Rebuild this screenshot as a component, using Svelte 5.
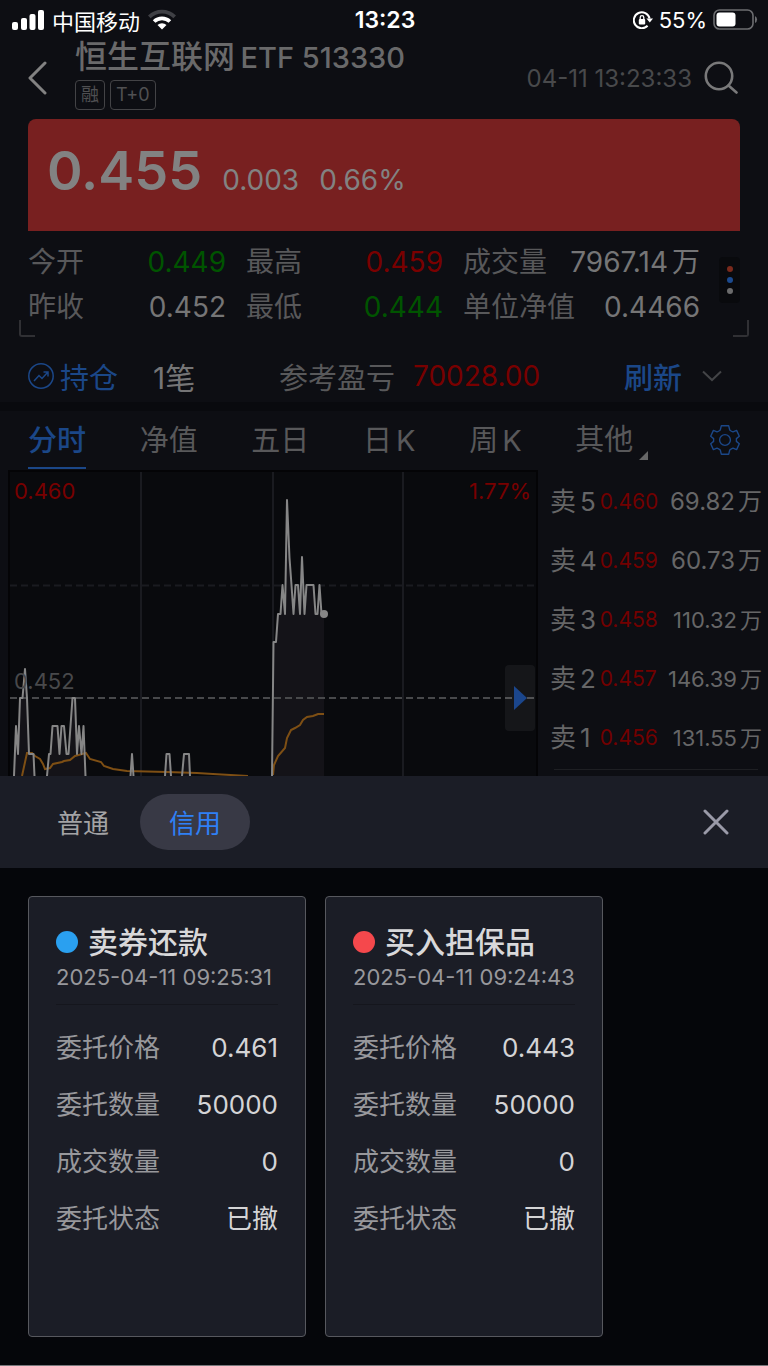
<script>
  let period = "分时";
  let account = "信用";

  const periods = [
    { name: "分时" },
    { name: "净值" },
    { name: "五日" },
    { name: "日", suffix: "K" },
    { name: "周", suffix: "K" },
  ];

  const quotes = [
    { label: "今开", value: "0.449", tone: "down" },
    { label: "最高", value: "0.459", tone: "up" },
    { label: "成交量", value: "7967.14", unit: "万", tone: "" },
    { label: "昨收", value: "0.452", tone: "" },
    { label: "最低", value: "0.444", tone: "down" },
    { label: "单位净值", value: "0.4466", tone: "" },
  ];

  const asks = [
    { level: 5, price: "0.460", volume: "69.82" },
    { level: 4, price: "0.459", volume: "60.73" },
    { level: 3, price: "0.458", volume: "110.32" },
    { level: 2, price: "0.457", volume: "146.39" },
    { level: 1, price: "0.456", volume: "131.55" },
  ];

  const orders = [
    {
      name: "卖券还款",
      side: "sell",
      time: "2025-04-11 09:25:31",
      rows: [
        ["委托价格", "0.461"],
        ["委托数量", "50000"],
        ["成交数量", "0"],
        ["委托状态", "已撤"],
      ],
    },
    {
      name: "买入担保品",
      side: "buy",
      time: "2025-04-11 09:24:43",
      rows: [
        ["委托价格", "0.443"],
        ["委托数量", "50000"],
        ["成交数量", "0"],
        ["委托状态", "已撤"],
      ],
    },
  ];

  // Price line, split where it drops below the visible part of the chart
  const priceLines = [
    "6,306 8,256 10,284 12,228 14.5,228 17,199 19,228 21,284 25.5,284 26.5,306",
    "39,306 41,284 42.5,284 44.5,256 49.5,256 51.5,284 53.5,256 56,256 58.5,284 60.5,284 64.5,228 67,228 69,284 71,256 73.5,284 75.5,256 77.5,306",
    "122.5,306 124,284 125.5,306",
    "157,306 158.5,284 161.5,284 163,306",
    "174,306 176,284 181,284 182,306",
    "264,306 265.5,172 268,172 270,144 272.5,144 274.5,115 277,144 279,30 281.5,88 283.5,115 285.5,144 287.5,115 290,115 292,144 294,87 296.5,144 298.5,115 305.5,115 307.5,144 309.5,144 311.5,115 313.5,144 316,144",
  ];

  const averageLines = [
    "14,306 19,283 24,283 27,286 32,289 35,294 37,299 42,298 45,294 54,292 56,291 62,290 67,286 78,283 82,289 93,292 96,296 105,299 119,301 159,302 189,303 205,304 240,306",
    "265,305 266,295 270,286 277,278 279,268 283,260 287,258 292,255 295,250 299,247 305,246 310,244 316,244",
  ];
</script>

<div class="app">
  <div class="status">
    <div class="carrier">
      <svg width="32" height="20" viewBox="0 0 32 20" fill="#fff">
        <rect x="0" y="12" width="6" height="8" rx="2" />
        <rect x="9" y="8" width="6" height="12" rx="2" />
        <rect x="17.5" y="4" width="6" height="16" rx="2" />
        <rect x="26" y="0" width="6" height="20" rx="2" />
      </svg>
      <span>中国移动</span>
      <svg width="28" height="21" viewBox="0 0 28 21">
        <path d="M0 6.5 A20 20 0 0 1 28 6.5 L25.4 9.2 A16.2 16.2 0 0 0 2.6 9.2 Z" fill="#3f4045" />
        <path d="M4.8 11.2 A13.2 13.2 0 0 1 23.2 11.2 L20.6 13.8 A9.5 9.5 0 0 0 7.4 13.8 Z" fill="#fff" />
        <path d="M9.5 16 A6.5 6.5 0 0 1 18.5 16 L14 20.5 Z" fill="#fff" />
      </svg>
    </div>
    <span class="clock">13:23</span>
    <div class="battery">
      <svg width="20" height="18" viewBox="0 0 20 18" fill="none" stroke="#fff" stroke-width="2">
        <path d="M14.6 14.8 A8 8 0 1 1 16.6 7.4" />
        <path d="M13.4 7.4 H20 L16.8 11.6 Z" fill="#fff" stroke="none" />
        <rect x="5.8" y="8" width="6.4" height="5.4" rx="1" fill="#fff" stroke="none" />
        <path d="M7.2 8.5 V6.5 A1.8 1.8 0 0 1 10.8 6.5 V8.5" stroke-width="1.3" />
      </svg>
      <span>55%</span>
      <svg width="45" height="21" viewBox="0 0 45 21">
        <rect x="1" y="1" width="39" height="19" rx="5.5" fill="none" stroke="#6c6d70" stroke-width="1.6" />
        <rect x="3.5" y="3.5" width="19" height="14" rx="3" fill="#fff" />
        <path d="M42 7 A4 4 0 0 1 42 14 Z" fill="#6c6d70" />
      </svg>
    </div>
  </div>

  <header>
    <button class="back" aria-label="返回">
      <svg width="20" height="34" viewBox="0 0 20 34" fill="none" stroke="#828282" stroke-width="3" stroke-linecap="round" stroke-linejoin="round">
        <path d="M17 2 L2 17 L17 32" />
      </svg>
    </button>
    <div class="name">
      <h1>恒生互联网 <span>ETF 513330</span></h1>
      <div class="tags"><span>融</span><span>T+0</span></div>
    </div>
    <time>04-11 13:23:33</time>
    <button class="search" aria-label="搜索">
      <svg width="34" height="34" viewBox="0 0 34 34" fill="none" stroke="#79797a" stroke-width="2.6" stroke-linecap="round">
        <circle cx="15" cy="15" r="13.2" />
        <path d="M24.5 24.5 L32.5 31.5" />
      </svg>
    </button>
  </header>

  <section class="price">
    <strong>0.455</strong>
    <span>0.003</span>
    <span>0.66%</span>
  </section>

  <section class="quotes">
    <dl>
      {#each quotes as q}
        <div>
          <dt>{q.label}</dt>
          <dd class={q.tone}>{q.value}{#if q.unit}<small>{q.unit}</small>{/if}</dd>
        </div>
      {/each}
    </dl>
    <button class="more" aria-label="更多"><i></i><i></i><i></i></button>
    <span class="corner left"></span>
    <span class="corner right"></span>
  </section>

  <section class="holding">
    <a href="#position">
      <svg width="26" height="26" viewBox="0 0 26 26" fill="none" stroke="currentColor" stroke-width="1.5">
        <circle cx="13" cy="13" r="12.2" />
        <path d="M6 18 L11 12.5 L14 15.5 L19.5 9.5 M15.5 9 H20 V13.5" />
      </svg>
      持仓
    </a>
    <span class="count">1笔</span>
    <span class="profit">参考盈亏</span>
    <span class="amount">70028.00</span>
    <button class="refresh">刷新</button>
    <button class="expand" aria-label="展开">
      <svg width="20" height="12" viewBox="0 0 20 12" fill="none" stroke="#434447" stroke-width="2">
        <path d="M1 1.5 L10 10 L19 1.5" />
      </svg>
    </button>
  </section>

  <nav>
    {#each periods as p}
      <button class:active={period === p.name} on:click={() => (period = p.name)}>
        {p.name}{#if p.suffix}<small>{p.suffix}</small>{/if}
      </button>
    {/each}
    <button class="others">
      其他
      <svg width="9" height="9" viewBox="0 0 9 9"><path d="M9 0 V9 H0 Z" fill="#666667" /></svg>
    </button>
    <button class="settings" aria-label="设置">
      <svg width="30" height="30" viewBox="0 0 30 30" fill="none" stroke="currentColor" stroke-width="1.4" stroke-linejoin="round">
        <path d="M11.3 .8 H18.7 L19.7 4.9 Q21.4 6.4 23 6.9 L26.6 5.4 L29.3 11.2 L26.4 13.6 V16.4 L29.3 18.8 L26.6 24.6 L23 23.1 Q21.4 23.6 19.7 25.1 L18.7 29.2 H11.3 L10.3 25.1 Q8.6 23.6 7 23.1 L3.4 24.6 L.7 18.8 L3.6 16.4 V13.6 L.7 11.2 L3.4 5.4 L7 6.9 Q8.6 6.4 10.3 4.9 Z" />
        <circle cx="15" cy="15" r="5.4" />
      </svg>
    </button>
  </nav>

  <main>
    <div class="chart">
      <svg viewBox="0 0 530 306" preserveAspectRatio="none">
        <rect x="1" y="1" width="528" height="320" fill="#090a0d" stroke="#040406" stroke-width="2" />
        <g stroke="#1a1b20" stroke-width="2">
          <path d="M133 2 V306 M265 2 V306 M395 2 V306" />
          <path d="M2 115.5 H528" stroke-dasharray="7 4" />
        </g>
        {#each priceLines as points}
          <polygon points="{points} {points.split(' ').pop().split(',')[0]},306" fill="#141318" />
        {/each}
        <path d="M2 228 H528" stroke="#48494b" stroke-width="2" stroke-dasharray="7 4" />
        {#each averageLines as points}
          <polyline {points} fill="none" stroke="#7e4f14" stroke-width="2" />
        {/each}
        {#each priceLines as points}
          <polyline {points} fill="none" stroke="#868686" stroke-width="2" stroke-linejoin="round" />
        {/each}
        <circle cx="316" cy="144" r="4" fill="#868686" />
      </svg>
      <span class="high">0.460</span>
      <span class="percent">1.77%</span>
      <span class="middle">0.452</span>
      <button aria-label="收起盘口">
        <svg width="13" height="24" viewBox="0 0 13 24"><path d="M0 0 L13 12 L0 24 Z" fill="#1b468c" /></svg>
      </button>
    </div>
    <div class="book">
      <table>
        <tbody>
          {#each asks as a}
            <tr>
              <th scope="row">卖<small>{a.level}</small></th>
              <td class="ask">{a.price}</td>
              <td class="volume" class:long={a.volume.length > 5}>{a.volume}<small>万</small></td>
            </tr>
          {/each}
        </tbody>
      </table>
    </div>
  </main>

  <section class="sheet">
    <div class="sheet-head">
      {#each ["普通", "信用"] as a}
        <button class="account" class:active={account === a} on:click={() => (account = a)}>{a}</button>
      {/each}
      <button class="close" aria-label="关闭">
        <svg width="26" height="26" viewBox="0 0 26 26" fill="none" stroke="#9a9aa8" stroke-width="3" stroke-linecap="round">
          <path d="M2 2 L24 24 M24 2 L2 24" />
        </svg>
      </button>
    </div>
    <div class="orders">
      {#each orders as o}
        <article>
          <h2><i class={o.side}></i>{o.name}</h2>
          <time>{o.time}</time>
          <dl>
            {#each o.rows as [label, value]}
              <div>
                <dt>{label}</dt>
                <dd>{value}</dd>
              </div>
            {/each}
          </dl>
        </article>
      {/each}
    </div>
  </section>
</div>

<style>
  :global(body) {
    background: #0d0e13;
  }

  .app {
    display: flex;
    flex-direction: column;
    min-height: 100vh;
    background: #0d0e13;
    color: #58585a;
    font-family: Inter, "Noto Sans CJK SC", sans-serif;
    font-size: 28px;
  }

  button {
    padding: 0;
    border: none;
    background: none;
    color: inherit;
    font: inherit;
    cursor: pointer;
  }

  svg {
    display: block;
    flex: none;
  }

  h1,
  h2,
  dl,
  dd {
    margin: 0;
  }

  small {
    margin-left: 4px;
    font-size: inherit;
  }

  .status {
    display: grid;
    grid-template-columns: 1fr auto 1fr;
    align-items: center;
    height: 39px;
    padding: 0 10px 0 12px;
    color: #fff;
    font-size: 22px;
  }

  .carrier,
  .battery {
    display: flex;
    align-items: center;
    gap: 8px;
  }

  .battery {
    justify-content: flex-end;
    gap: 6px;
  }

  .clock {
    font-size: 23px;
    font-weight: 600;
  }

  header {
    display: flex;
    align-items: center;
    height: 80px;
    padding: 0 30px 2px 28px;
    box-sizing: border-box;
  }

  .back {
    width: 47px;
  }

  .name {
    flex: 1;
    align-self: flex-start;
  }

  h1 {
    color: #69696a;
    font-size: 32px;
    font-weight: 500;
    line-height: 36px;
    white-space: nowrap;
  }

  h1 span {
    margin-left: -3px;
    font-size: 29px;
  }

  .tags {
    display: flex;
    gap: 5px;
    margin-top: 4px;
    font-size: 18px;
    line-height: 28px;
  }

  .tags span {
    padding: 0 5px;
    border: 1px solid #434346;
    border-radius: 4px;
    color: #505052;
  }

  header time {
    color: #48494b;
    font-size: 24px;
  }

  .search {
    margin-left: 12px;
  }

  .price {
    display: flex;
    align-items: baseline;
    gap: 20px;
    height: 112px;
    margin: 0 28px;
    padding: 0 19px;
    box-sizing: border-box;
    border-radius: 8px 8px 0 0;
    background: #782020;
    color: #828282;
    line-height: 104px;
  }

  .price strong {
    font-size: 54px;
    font-weight: 600;
  }

  .quotes {
    position: relative;
    display: flex;
    align-items: flex-start;
    justify-content: space-between;
    padding: 9px 28px 20px;
  }

  .quotes dl {
    flex: 1;
    display: grid;
    grid-template-columns: 198fr 197fr 237fr;
    column-gap: 20px;
    margin-right: 19px;
  }

  dl div {
    display: flex;
    justify-content: space-between;
    white-space: nowrap;
  }

  .quotes dl div {
    line-height: 45px;
  }

  .quotes dd {
    color: #757576;
  }

  .quotes .up {
    color: #7a0000;
  }

  .quotes .down {
    color: #005400;
  }

  .more {
    display: flex;
    flex-direction: column;
    align-items: center;
    justify-content: center;
    gap: 5px;
    width: 21px;
    height: 46px;
    margin-top: 17px;
    border-radius: 4px;
    background: #090a0d;
  }

  .more i {
    width: 6px;
    height: 6px;
    border-radius: 50%;
    background: #7b2a1c;
  }

  .more i:nth-child(2) {
    background: #1b4a8f;
  }

  .more i:nth-child(3) {
    background: #6b6b6c;
  }

  .corner {
    position: absolute;
    bottom: 13px;
    width: 14px;
    height: 15px;
    border-bottom: 2px solid #303034;
  }

  .corner.left {
    left: 19px;
    border-left: 2px solid #303034;
    border-bottom-left-radius: 3px;
  }

  .corner.right {
    right: 19px;
    border-right: 2px solid #303034;
    border-bottom-right-radius: 3px;
  }

  .holding {
    display: flex;
    align-items: center;
    height: 52px;
    padding: 0 46px 0 28px;
    border-bottom: 9px solid #090a0e;
    white-space: nowrap;
  }

  .holding a {
    display: flex;
    align-items: center;
    gap: 6px;
    color: #1b4788;
    font-size: 29px;
    text-decoration: none;
  }

  .count {
    margin-left: 35px;
    color: #757576;
    font-size: 30px;
  }

  .profit {
    margin-left: auto;
    font-size: 29px;
  }

  .amount {
    margin: 0 auto 0 18px;
    color: #780000;
  }

  .refresh {
    color: #1b4788;
    font-size: 29px;
    font-weight: 500;
  }

  .expand {
    margin-left: 20px;
  }

  nav {
    display: flex;
    align-items: center;
    justify-content: space-between;
    height: 59px;
    padding: 0 28px;
    font-size: 29px;
  }

  nav button {
    height: 56px;
    line-height: 56px;
    border-bottom: 2px solid transparent;
    white-space: nowrap;
  }

  nav .active {
    border-color: #1b4788;
    color: #1b4788;
    font-weight: 500;
  }

  .others {
    display: flex;
    align-items: center;
    gap: 6px;
    margin-right: 8px;
  }

  .others svg {
    align-self: flex-end;
    margin-bottom: 7px;
  }

  .settings {
    display: flex;
    align-items: center;
    color: #1b4788;
  }

  main {
    display: grid;
    grid-template-columns: 530fr 218fr;
    gap: 12px;
    height: 306px;
    padding: 0 0 0 8px;
    overflow: hidden;
  }

  .chart {
    position: relative;
    font-size: 22px;
    line-height: 28px;
  }

  .chart > svg {
    width: 100%;
    height: 306px;
  }

  .chart span {
    position: absolute;
    left: 6px;
    top: 7px;
    color: #780000;
  }

  .chart .percent {
    left: auto;
    right: 7px;
  }

  .chart .middle {
    top: 197px;
    color: #48494b;
  }

  .chart button {
    position: absolute;
    right: 3px;
    top: 195px;
    display: flex;
    align-items: center;
    justify-content: center;
    width: 30px;
    height: 66px;
    border-radius: 4px;
    background: rgba(255, 255, 255, 0.05);
  }

  .book table {
    width: 100%;
    margin-top: 2px;
    border-collapse: collapse;
    color: #666667;
    white-space: nowrap;
  }

  .book th,
  .book td {
    height: 59px;
    padding: 0;
    line-height: 32px;
  }

  .book th {
    font-size: 26px;
    font-weight: 400;
    text-align: left;
  }

  .book .ask {
    color: #720000;
    font-size: 21px;
  }

  .book .volume {
    padding-right: 6px;
    font-size: 24px;
    text-align: right;
  }

  .book .volume.long {
    font-size: 22px;
  }

  .book .volume small {
    margin-left: 3px;
  }

  .book table::after {
    content: "";
    display: table-caption;
    caption-side: bottom;
    height: 1px;
    margin: 2px 10px 0 4px;
    background: #1e1f23;
  }

  .sheet {
    flex: 1;
    display: flex;
    flex-direction: column;
    border-bottom: 1px solid #77777b;
    background: #05060a;
  }

  .sheet-head {
    display: flex;
    align-items: center;
    height: 92px;
    padding: 0 39px 0 28px;
    background: #1b1d26;
    font-size: 26px;
  }

  .account {
    width: 110px;
    height: 56px;
    padding-bottom: 2px;
    border-radius: 28px;
    color: #a3a3a5;
  }

  .account.active {
    margin-left: 2px;
    background: #383945;
    color: #2f80f5;
  }

  .close {
    margin-left: auto;
  }

  .orders {
    flex: 1;
    display: grid;
    grid-template-columns: repeat(auto-fill, 278px);
    gap: 19px;
    padding: 28px;
  }

  article {
    min-height: 440px;
    padding: 27px;
    box-sizing: border-box;
    border: 1px solid #57585e;
    border-radius: 4px;
    background: #1b1d26;
    font-size: 26px;
  }

  h2 {
    display: flex;
    align-items: center;
    gap: 10px;
    color: #d8d8da;
    font-size: 30px;
    font-weight: 500;
    line-height: 36px;
  }

  h2 i {
    width: 22px;
    height: 22px;
    border-radius: 50%;
    background: #2aa0f0;
  }

  h2 .buy {
    background: #f5484c;
  }

  article time {
    display: block;
    padding-bottom: 10px;
    border-bottom: 1px solid #15161d;
    color: #98989c;
    font-size: 22px;
    line-height: 34px;
    white-space: nowrap;
  }

  article dl {
    margin-top: 14px;
    color: #98989c;
    line-height: 57px;
  }

  article dd {
    color: #d4d4d6;
  }
</style>
